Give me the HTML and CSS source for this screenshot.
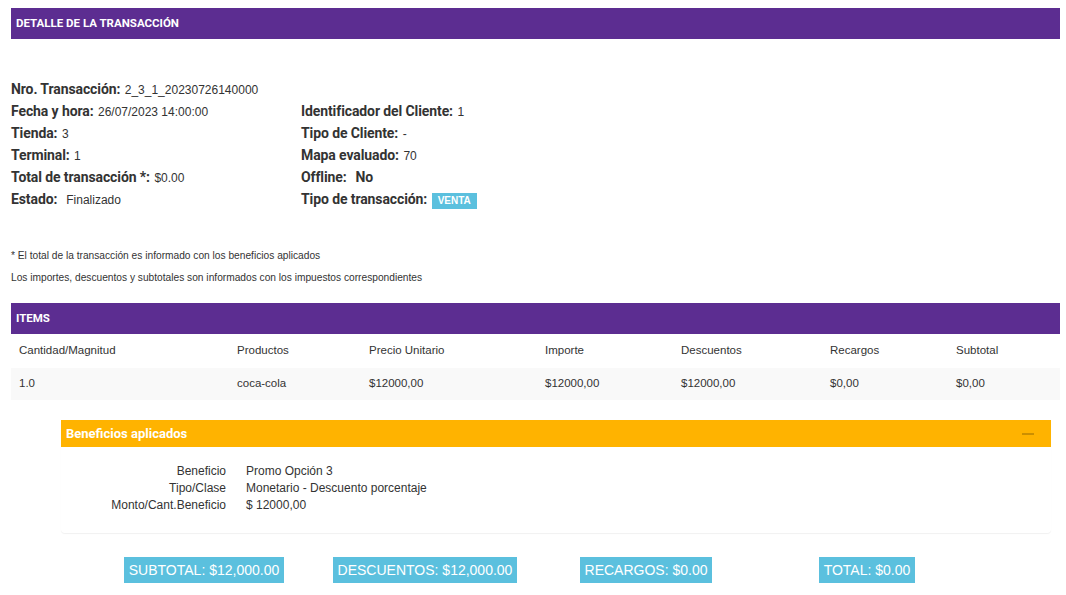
FILE: index.html
```html
<!DOCTYPE html>
<html lang="es">
<head>
<meta charset="utf-8">
<title>Detalle de la transacción</title>
<link rel="stylesheet" href="styles.css">
</head>
<body>
<div class="page">
  <div class="bar">DETALLE DE LA TRANSACCIÓN</div>

  <div class="details">
    <div class="col">
      <div class="row"><span class="lbl">Nro. Transacción:</span> <span class="val">2_3_1_20230726140000</span></div>
      <div class="row"><span class="lbl">Fecha y hora:</span> <span class="val">26/07/2023 14:00:00</span></div>
      <div class="row"><span class="lbl">Tienda:</span> <span class="val">3</span></div>
      <div class="row"><span class="lbl">Terminal:</span> <span class="val">1</span></div>
      <div class="row"><span class="lbl">Total de transacción *:</span> <span class="val">$0.00</span></div>
      <div class="row"><span class="lbl">Estado:</span>&nbsp; <span class="val">Finalizado</span></div>
    </div>
    <div class="col col-right">
      <div class="row"><span class="lbl">Identificador del Cliente:</span> <span class="val">1</span></div>
      <div class="row"><span class="lbl">Tipo de Cliente:</span> <span class="val">-</span></div>
      <div class="row"><span class="lbl">Mapa evaluado:</span> <span class="val">70</span></div>
      <div class="row"><span class="lbl">Offline:</span>&nbsp; <span class="lbl">No</span></div>
      <div class="row"><span class="lbl">Tipo de transacción:</span> <span class="badge">VENTA</span></div>
    </div>
  </div>

  <div class="notes">
    <p>* El total de la transacción es informado con los beneficios aplicados</p>
    <p>Los importes, descuentos y subtotales son informados con los impuestos correspondientes</p>
  </div>

  <div class="bar bar-items">ITEMS</div>

  <div class="table">
    <div class="trow thead">
      <div class="cell">Cantidad/Magnitud</div>
      <div class="cell">Productos</div>
      <div class="cell">Precio Unitario</div>
      <div class="cell">Importe</div>
      <div class="cell">Descuentos</div>
      <div class="cell">Recargos</div>
      <div class="cell">Subtotal</div>
    </div>
    <div class="trow tbody">
      <div class="cell">1.0</div>
      <div class="cell">coca-cola</div>
      <div class="cell">$12000,00</div>
      <div class="cell">$12000,00</div>
      <div class="cell">$12000,00</div>
      <div class="cell">$0,00</div>
      <div class="cell">$0,00</div>
    </div>
  </div>

  <div class="panel">
    <div class="panel-head">
      <span>Beneficios aplicados</span>
      <span class="minus"></span>
    </div>
    <div class="panel-body">
      <div class="dl">
        <div class="dt">Beneficio</div><div class="dd">Promo Opción 3</div>
        <div class="dt">Tipo/Clase</div><div class="dd">Monetario - Descuento porcentaje</div>
        <div class="dt">Monto/Cant.Beneficio</div><div class="dd">$ 12000,00</div>
      </div>
    </div>
  </div>

  <div class="totals">
    <div class="tcol"><span class="tbtn">SUBTOTAL: $12,000.00</span></div>
    <div class="tcol"><span class="tbtn">DESCUENTOS: $12,000.00</span></div>
    <div class="tcol"><span class="tbtn">RECARGOS: $0.00</span></div>
    <div class="tcol"><span class="tbtn">TOTAL: $0.00</span></div>
  </div>
</div>
</body>
</html>
```

FILE: styles.css
```css
* { box-sizing: border-box; }

html, body {
  margin: 0;
  padding: 0;
  background: #ffffff;
  color: #333333;
  font-family: "Liberation Sans", Arial, sans-serif;
}

.page {
  padding: 8px 6px 0 11px;
  width: 1066px;
}

.bar {
  height: 31px;
  line-height: 31px;
  padding-left: 5px;
  background: #5c2d91;
  color: #ffffff;
  font-family: Roboto, "Liberation Sans", sans-serif;
  font-weight: 700;
  font-size: 11.5px;
}

.details {
  margin-top: 39px;
  display: grid;
  grid-template-columns: 290px 1fr;
}

.col-right { padding-top: 22px; }

.row {
  height: 22px;
  line-height: 22px;
  white-space: nowrap;
}

.lbl {
  font-family: Roboto, "Liberation Sans", sans-serif;
  font-weight: 700;
  font-size: 14px;
  letter-spacing: -0.1px;
  color: #333333;
}

.val {
  font-size: 12px;
  color: #333333;
}

.badge {
  display: inline-block;
  background: #5bc0de;
  color: #ffffff;
  font-weight: 700;
  font-size: 10px;
  line-height: 10px;
  padding: 3px 6px 3px;
  vertical-align: 0;
}

.notes {
  margin-top: 35px;
  font-size: 10.2px;
  color: #333333;
}

.notes p {
  margin: 0;
  line-height: 22px;
}

.bar-items { margin-top: 14px; }

.trow {
  display: grid;
  grid-template-columns: 218px 132px 176px 136px 149px 126px 1fr;
  font-size: 11.5px;
  color: #333333;
}

.thead { height: 34px; line-height: 33px; }
.tbody { height: 32px; line-height: 31px; background: #f9f9f9; }

.cell { padding-left: 8px; }

.panel {
  margin: 20px 9px 0 50px;
  border-radius: 0 0 4px 4px;
  box-shadow: 0 1px 1px rgba(0, 0, 0, 0.06);
}

.panel-head {
  height: 27px;
  line-height: 27px;
  padding: 0 17px 0 5px;
  background: #ffb300;
  color: #ffffff;
  font-family: Roboto, "Liberation Sans", sans-serif;
  font-weight: 700;
  font-size: 13px;
  display: flex;
  justify-content: space-between;
  align-items: center;
}

.minus {
  width: 12px;
  height: 2px;
  background: #cc8f00;
}

.panel-body {
  padding: 16px 0 19px;
}

.dl {
  display: grid;
  grid-template-columns: 165px 1fr;
  column-gap: 20px;
  font-size: 12px;
  line-height: 17px;
  color: #333333;
}

.dt { text-align: right; }

.totals {
  margin-top: 24px;
  display: grid;
  grid-template-columns: repeat(4, 221px);
  justify-content: center;
}

.tcol { text-align: center; }

.tbtn {
  display: inline-block;
  height: 26px;
  line-height: 26px;
  padding: 0 5px;
  background: #5bc0de;
  color: #ffffff;
  font-size: 14px;
}
```
